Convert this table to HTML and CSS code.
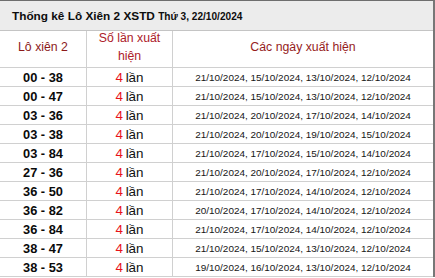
FILE: index.html
```html
<!DOCTYPE html>
<html lang="vi">
<head>
<meta charset="utf-8">
<title>Thống kê Lô Xiên 2 XSTD</title>
<link rel="stylesheet" href="styles.css">
</head>
<body>
<div class="wrap">
  <div class="title">Thống kê Lô Xiên 2 XSTD <span class="date">Thứ 3, 22/10/2024</span></div>
  <div class="grid">
    <div class="cell head c1">Lô xiên 2</div>
    <div class="cell head c2">Số lần xuất<br>hiện</div>
    <div class="cell head c3">Các ngày xuất hiện</div>

    <div class="cell pair">00 - 38</div><div class="cell count"><span class="n">4</span> lần</div><div class="cell days">21/10/2024, 15/10/2024, 13/10/2024, 12/10/2024</div>
    <div class="cell pair">00 - 47</div><div class="cell count"><span class="n">4</span> lần</div><div class="cell days">21/10/2024, 15/10/2024, 13/10/2024, 12/10/2024</div>
    <div class="cell pair">03 - 36</div><div class="cell count"><span class="n">4</span> lần</div><div class="cell days">21/10/2024, 20/10/2024, 17/10/2024, 14/10/2024</div>
    <div class="cell pair">03 - 38</div><div class="cell count"><span class="n">4</span> lần</div><div class="cell days">21/10/2024, 20/10/2024, 19/10/2024, 15/10/2024</div>
    <div class="cell pair">03 - 84</div><div class="cell count"><span class="n">4</span> lần</div><div class="cell days">21/10/2024, 17/10/2024, 15/10/2024, 14/10/2024</div>
    <div class="cell pair">27 - 36</div><div class="cell count"><span class="n">4</span> lần</div><div class="cell days">21/10/2024, 20/10/2024, 17/10/2024, 12/10/2024</div>
    <div class="cell pair">36 - 50</div><div class="cell count"><span class="n">4</span> lần</div><div class="cell days">21/10/2024, 17/10/2024, 14/10/2024, 12/10/2024</div>
    <div class="cell pair">36 - 82</div><div class="cell count"><span class="n">4</span> lần</div><div class="cell days">20/10/2024, 17/10/2024, 14/10/2024, 12/10/2024</div>
    <div class="cell pair">36 - 84</div><div class="cell count"><span class="n">4</span> lần</div><div class="cell days">21/10/2024, 17/10/2024, 14/10/2024, 12/10/2024</div>
    <div class="cell pair">38 - 47</div><div class="cell count"><span class="n">4</span> lần</div><div class="cell days">21/10/2024, 15/10/2024, 13/10/2024, 12/10/2024</div>
    <div class="cell pair">38 - 53</div><div class="cell count"><span class="n">4</span> lần</div><div class="cell days">19/10/2024, 16/10/2024, 13/10/2024, 12/10/2024</div>
  </div>
</div>
</body>
</html>
```
FILE: styles.css
```css
html, body {
  margin: 0;
  padding: 0;
  background: #ffffff;
}
body {
  font-family: "Liberation Sans", Arial, sans-serif;
  color: #111;
}
.wrap {
  width: 435px;
  box-sizing: border-box;
  border-top: 1px solid #6e6e6e;
  border-right: 2px solid #777;
}
.title {
  height: 30px;
  box-sizing: border-box;
  background: #ececec;
  border-bottom: 1px solid #c4c4c4;
  padding-left: 12px;
  font-size: 11.8px;
  font-weight: bold;
  line-height: 31px;
  color: #0d0d0d;
  white-space: nowrap;
}
.title .date {
  font-size: 10.1px;
}
.grid {
  display: grid;
  grid-template-columns: 87px 86px 1fr;
}
.cell {
  display: flex;
  align-items: center;
  justify-content: center;
  border-bottom: 1px solid #d0d0d0;
  border-right: 1px solid #d0d0d0;
  height: 19px;
  box-sizing: border-box;
  white-space: nowrap;
}
.cell.days, .cell.c3 {
  border-right: none;
}
.head {
  height: 37px;
  font-size: 12.3px;
  line-height: 17.6px;
  text-align: center;
  color: #8c1a1a;
  padding-bottom: 2px;
}
.head.c2 {
  color: #ad2029;
}
.head.c3 {
  color: #961c1c;
}
.pair {
  font-size: 12.8px;
  font-weight: bold;
  color: #0a0a0a;
  padding-top: 1px;
}
.count {
  font-size: 13.4px;
  color: #111;
  padding-top: 1px;
}
.count .n {
  color: #e8121a;
  margin-right: 0.2em;
}
.days {
  font-size: 9.95px;
  color: #161616;
  padding-top: 1px;
}
```
